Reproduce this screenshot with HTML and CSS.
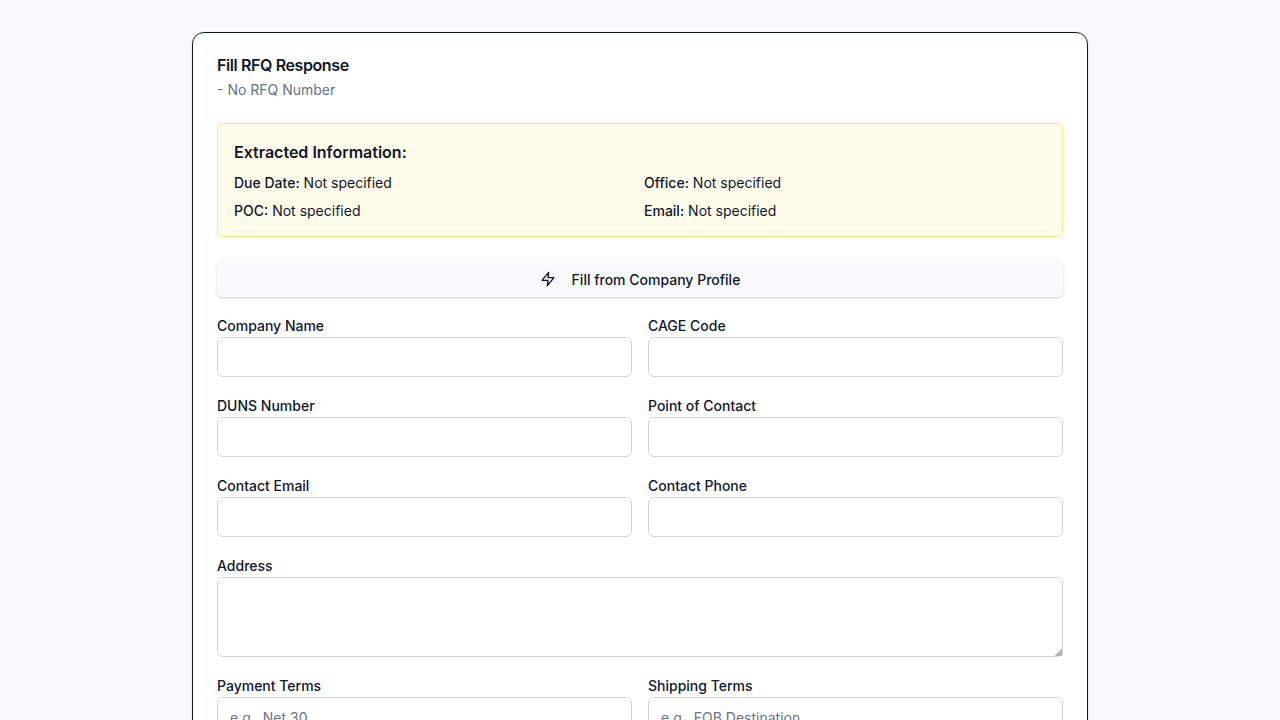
FILE: index.html
```html
<!DOCTYPE html>
<html lang="en">
<head>
<meta charset="utf-8">
<title>Fill RFQ Response</title>
<link rel="stylesheet" href="styles.css">
</head>
<body>
<main class="card">
  <header class="card-header">
    <h1 class="title">Fill RFQ Response</h1>
    <p class="subtitle">- No RFQ Number</p>
  </header>
  <section class="notice">
    <h2 class="notice-title">Extracted Information:</h2>
    <div class="facts">
      <div><strong>Due Date:</strong> Not specified</div>
      <div><strong>Office:</strong> Not specified</div>
      <div><strong>POC:</strong> Not specified</div>
      <div><strong>Email:</strong> Not specified</div>
    </div>
  </section>
  <button class="fill-button" type="button">
    <svg class="icon" viewBox="0 0 24 24" fill="none" stroke="currentColor" stroke-width="2" stroke-linecap="round" stroke-linejoin="round"><polygon points="13 2 3 14 12 14 11 22 21 10 12 10 13 2"/></svg>
    <span class="button-label">Fill from Company Profile</span>
  </button>
  <form class="form">
    <label class="field">Company Name<input class="control" type="text"></label>
    <label class="field">CAGE Code<input class="control" type="text"></label>
    <label class="field">DUNS Number<input class="control" type="text"></label>
    <label class="field">Point of Contact<input class="control" type="text"></label>
    <label class="field">Contact Email<input class="control" type="email"></label>
    <label class="field">Contact Phone<input class="control" type="tel"></label>
    <label class="field wide">Address<textarea class="control area"></textarea></label>
    <label class="field">Payment Terms<input class="control" type="text" placeholder="e.g., Net 30"></label>
    <label class="field">Shipping Terms<input class="control" type="text" placeholder="e.g., FOB Destination"></label>
  </form>
</main>
</body>
</html>
```
FILE: styles.css
```css
* { box-sizing: border-box; }
html, body { height: 100%; overflow: hidden; }
body {
  margin: 0;
  padding: 32px 0;
  background: #f8fafc;
  color: #0f172a;
  font-family: Inter, sans-serif;
  font-size: 14px;
  line-height: 20px;
}
.card {
  width: 896px;
  margin: 0 auto;
  padding: 24px;
  background: #fff;
  border: 1px solid #0f172a;
  border-radius: 12px;
  box-shadow: 0 1px 3px rgba(0, 0, 0, .1), 0 1px 2px -1px rgba(0, 0, 0, .1);
}
.card-header { margin-bottom: 23px; }
.title {
  margin: 0 0 7px;
  font-size: 16px;
  line-height: 16px;
  font-weight: 600;
  letter-spacing: -.4px;
}
.subtitle { margin: 0; color: #64748b; }
.notice {
  padding: 16px 16px 15px;
  margin-bottom: 24px;
  background: #fffbeb;
  border: 1px solid #fde68a;
  border-radius: 4px;
}
.notice-title {
  margin: 0 0 9px;
  font-size: 16px;
  line-height: 24px;
  font-weight: 600;
}
.facts { display: grid; grid-template-columns: 1fr 1fr; gap: 8px; }
.facts strong { font-weight: 500; }
.fill-button {
  display: flex;
  align-items: center;
  justify-content: center;
  gap: 16px;
  width: 100%;
  height: 36px;
  margin-bottom: 16px;
  border: 1px solid rgba(255, 255, 255, .7);
  border-radius: 6px;
  background: #f8fafc;
  color: inherit;
  font: 500 14px/20px Inter, sans-serif;
  box-shadow: 0 1px 3px rgba(0, 0, 0, .13), 0 1px 2px rgba(0, 0, 0, .07);
}
.button-label { padding-top: 2px; }
.icon { width: 16px; height: 16px; }
.form { display: grid; grid-template-columns: 1fr 1fr; gap: 16px; }
.field { display: block; padding-top: 3px; font-weight: 500; height: 64px; }
.wide { grid-column: 1 / -1; height: 104px; }
.control {
  display: block;
  width: 100%;
  height: 40px;
  margin-top: 1px;
  padding: 8px 12px;
  border: 1px solid #d1d5db;
  border-radius: 6px;
  background: #fff;
  color: inherit;
  font: 400 14px/20px Inter, sans-serif;
}
.area { height: 80px; resize: vertical; }
.area::-webkit-resizer {
  background: linear-gradient(135deg, transparent 0 calc(100% - 5px), #b4b4b4 calc(100% - 5px)) right bottom / 100% 100% no-repeat;
}
.control::placeholder { color: #6b7280; opacity: 1; }
```
